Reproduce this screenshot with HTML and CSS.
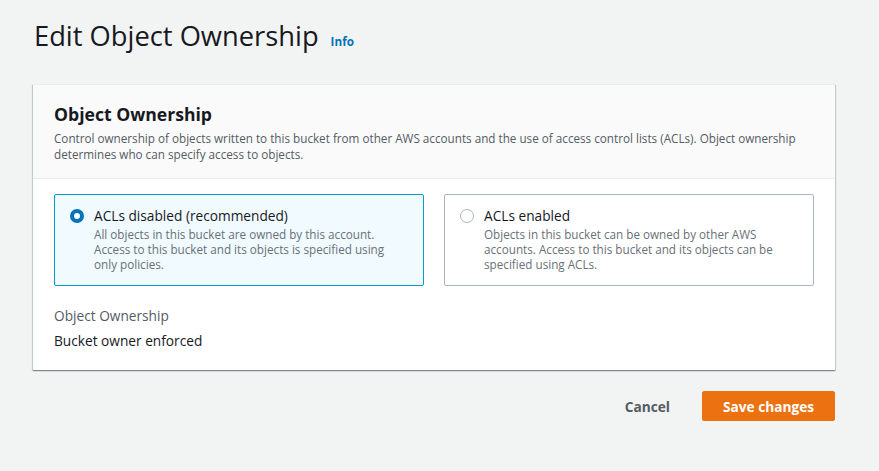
FILE: index.html
```html
<!DOCTYPE html>
<html lang="en">
<head>
  <meta charset="UTF-8" />
  <meta name="viewport" content="width=device-width, initial-scale=1.0"/>
  <title>Edit Object Ownership</title>
  <link rel="stylesheet" href="styles.css">
</head>
<body>
  <div class="page">
    <header class="page-header">
      <h1>Edit Object Ownership</h1>
      <a class="info-link" href="#">Info</a>
    </header>

    <section class="panel">
      <div class="panel-header">
        <h2>Object Ownership</h2>
        <p>Control ownership of objects written to this bucket from other AWS accounts and the use of access control lists (ACLs). Object ownership determines who can specify access to objects.</p>
      </div>
      <div class="panel-body">
        <div class="tiles">
          <label class="tile selected">
            <span class="radio checked"></span>
            <span class="tile-text">
              <span class="tile-title">ACLs disabled (recommended)</span>
              <span class="tile-desc">All objects in this bucket are owned by this account. Access to this bucket and its objects is specified using only policies.</span>
            </span>
          </label>
          <label class="tile">
            <span class="radio"></span>
            <span class="tile-text">
              <span class="tile-title">ACLs enabled</span>
              <span class="tile-desc">Objects in this bucket can be owned by other AWS accounts. Access to this bucket and its objects can be specified using ACLs.</span>
            </span>
          </label>
        </div>
        <div class="field">
          <div class="field-label">Object Ownership</div>
          <div class="field-value">Bucket owner enforced</div>
        </div>
      </div>
    </section>

    <div class="actions">
      <button class="btn-link">Cancel</button>
      <button class="btn-primary">Save changes</button>
    </div>
  </div>
</body>
</html>
```

FILE: styles.css
```css
body {
  font-family: 'Open Sans', 'Noto Sans', sans-serif;
  background: #f2f3f3;
  color: #16191f;
  margin: 0;
  padding: 0;
}
.page {
  width: 802px;
  padding: 14px 0 0 33px;
}
.page-header {
  display: flex;
  align-items: baseline;
  gap: 12px;
  margin-bottom: 26px;
}
.page-header h1 {
  margin: 0;
  font-size: 27.3px;
  font-weight: 400;
  line-height: 44px;
  padding-left: 1px;
}
.info-link {
  color: #0073bb;
  font-size: 11.7px;
  font-weight: 700;
  text-decoration: none;
}
.panel {
  background: #fff;
  box-shadow: 0 1px 1px 0 rgba(0, 28, 36, 0.3), 1px 1px 1px 0 rgba(0, 28, 36, 0.15), -1px 1px 1px 0 rgba(0, 28, 36, 0.15);
  border-top: 1px solid #eaeded;
}
.panel-header {
  background: #fafafa;
  border-bottom: 1px solid #eaeded;
  padding: 17px 20px 16px 21px;
}
.panel-header h2 {
  margin: 0 0 4px;
  font-size: 17.6px;
  font-weight: 700;
  line-height: 24px;
}
.panel-header p {
  margin: 0;
  font-size: 11.7px;
  line-height: 16px;
  color: #545b64;
}
.panel-body {
  padding: 15px 21px 18px;
}
.tiles {
  display: grid;
  grid-template-columns: 1fr 1fr;
  gap: 20px;
}
.tile {
  display: flex;
  gap: 10px;
  border: 1px solid #aab7b8;
  border-radius: 2px;
  padding: 10px 20px 13px 15px;
  cursor: pointer;
}
.tile.selected {
  border-color: #00a1c9;
  background: #f1faff;
}
.radio {
  flex: none;
  box-sizing: border-box;
  width: 14px;
  height: 14px;
  margin-top: 4px;
  border-radius: 50%;
  border: 1px solid #aab7b8;
  background: #fff;
}
.radio.checked {
  border: 4px solid #0073bb;
}
.tile-text {
  display: flex;
  flex-direction: column;
}
.tile-title {
  font-size: 13.7px;
  line-height: 22px;
}
.tile-desc {
  font-size: 11.7px;
  line-height: 15px;
  color: #687078;
}
.field {
  margin-top: 19px;
}
.field-label {
  font-size: 13.7px;
  line-height: 22px;
  color: #545b64;
  margin-bottom: 3px;
}
.field-value {
  font-size: 13.7px;
  line-height: 22px;
}
.actions {
  display: flex;
  justify-content: flex-end;
  align-items: center;
  gap: 20px;
  margin-top: 21px;
}
.btn-link {
  background: none;
  border: none;
  font-family: inherit;
  font-size: 13.7px;
  font-weight: 700;
  color: #545b64;
  padding: 4px 12px;
  cursor: pointer;
}
.btn-primary {
  background: #ec7211;
  border: 1px solid #ec7211;
  border-radius: 2px;
  color: #fff;
  font-family: inherit;
  font-size: 13.7px;
  font-weight: 700;
  padding: 0;
  width: 133px;
  height: 30px;
  white-space: nowrap;
  cursor: pointer;
}
```
